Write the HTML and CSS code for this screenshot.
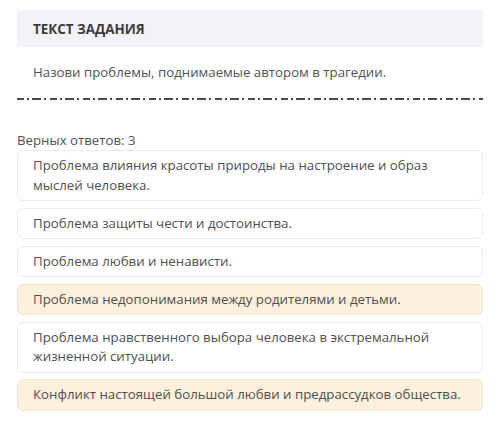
FILE: index.html
```html
<!DOCTYPE html>
<html lang="ru">
<head>
<meta charset="utf-8">
<link rel="stylesheet" href="styles.css">
</head>
<body>
<div class="page">
  <div class="task-head">ТЕКСТ ЗАДАНИЯ</div>
  <div class="question">Назови проблемы, поднимаемые автором в трагедии.</div>
  <div class="broken"></div>
  <div class="count">Верных ответов: 3</div>
  <div class="answers">
    <div class="answer">Проблема влияния красоты природы на настроение и образ мыслей человека.</div>
    <div class="answer">Проблема защиты чести и достоинства.</div>
    <div class="answer">Проблема любви и ненависти.</div>
    <div class="answer answer-correct">Проблема недопонимания между родителями и детьми.</div>
    <div class="answer">Проблема нравственного выбора человека в экстремальной жизненной ситуации.</div>
    <div class="answer answer-correct">Конфликт настоящей большой любви и предрассудков общества.</div>
  </div>
</div>
</body>
</html>
```
FILE: styles.css
```css
html, body {
  margin: 0;
  padding: 0;
  background: #ffffff;
}
body {
  font-family: "Open Sans", "Noto Sans", sans-serif;
  color: #525252;
  font-size: 13.25px;
}
.page {
  padding: 10px 17px 0 17px;
}
.task-head {
  background: #f2f3f7;
  height: 37px;
  display: flex;
  align-items: center;
  padding-left: 16px;
  font-weight: 700;
  font-size: 13.4px;
  color: #3d3d3d;
  border-radius: 2px;
}
.question {
  padding: 15px 16px 0 16px;
  line-height: 20px;
  color: #525252;
}
.broken {
  margin-top: 16px;
  height: 2px;
  background: repeating-linear-gradient(90deg, #4a4a4a 0 7px, transparent 7px 10px, #4a4a4a 10px 12px, transparent 12px 15px, #4a4a4a 15px 24px, transparent 24px 27px, #4a4a4a 27px 29px, transparent 29px 33px);
}
.count {
  margin-top: 30px;
  line-height: 20px;
  color: #525252;
}
.answers {
  display: flex;
  flex-direction: column;
  gap: 6.5px;
}
.answer {
  border: 1px solid #ebebef;
  border-radius: 6px;
  padding: 5px 15px;
  line-height: 19.5px;
  color: #4f4f4f;
  background: #ffffff;
}
.answer-correct {
  background: #fbf1dd;
  border-color: #f3e6c8;
}
```
